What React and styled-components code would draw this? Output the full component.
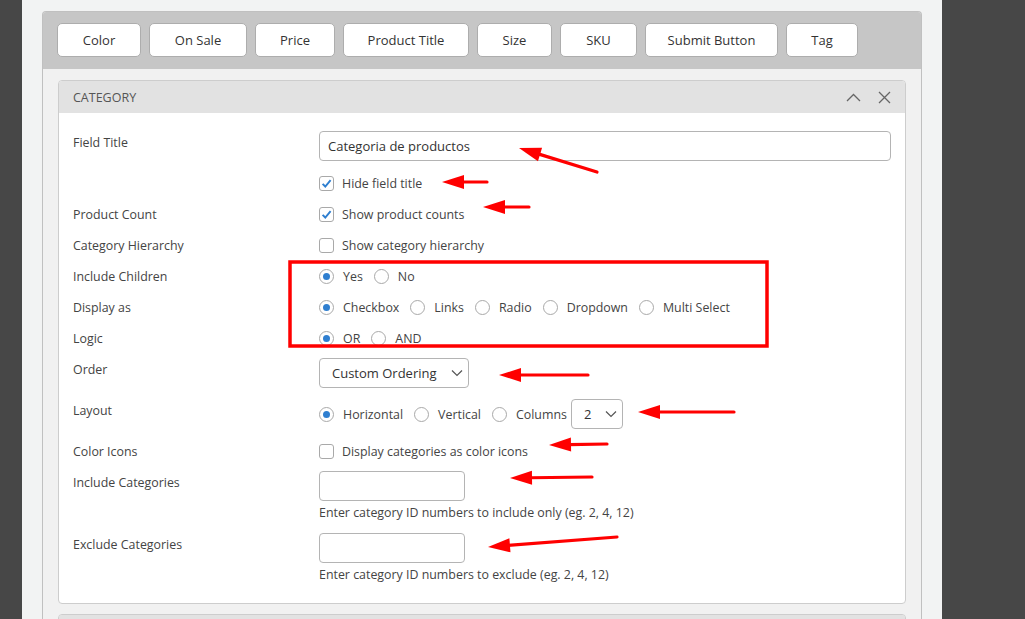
import React from 'react';
import styled, { createGlobalStyle } from 'styled-components';

const GlobalStyle = createGlobalStyle`
  * { box-sizing: border-box; }
  html, body { margin: 0; padding: 0; background: #474747; }
  body {
    font-family: "Open Sans", "Liberation Sans", sans-serif;
    font-size: 12.4px;
    color: #444;
  }
`;

const Page = styled.div`
  position: relative;
  width: 1025px;
  height: 619px;
  overflow: hidden;
`;

const Main = styled.main`
  margin-left: 22px;
  width: 920px;
  height: 619px;
  background: #f2f3f3;
  padding: 11px 20px 0 20px;
`;

const OuterPanel = styled.section`
  width: 880px;
  min-height: 620px;
  border: 1px solid #c0c0c0;
  border-bottom: none;
  border-radius: 4px 4px 0 0;
  background: #f1f1f1;
`;

const Toolbar = styled.nav`
  display: flex;
  gap: 8px;
  padding: 11px 14px 12px;
  background: #c6c6c6;
  border-radius: 3px 3px 0 0;
`;

const TabButton = styled.button`
  width: ${p => p.$w}px;
  height: 34px;
  border: 1px solid #adadad;
  border-radius: 5px;
  background: #fff;
  font-family: inherit;
  font-size: 13px;
  color: #333;
  padding: 0;
`;

const PanelBody = styled.div`
  padding: 11px 15px 0;
  display: flex;
  flex-direction: column;
  gap: 10px;
`;

const Box = styled.div`
  border: 1px solid #cdcdcd;
  border-radius: 4px;
  background: #fff;
  overflow: hidden;
`;

const BoxHeader = styled.header`
  height: 32px;
  display: flex;
  align-items: center;
  justify-content: space-between;
  padding: 1px 14px 0;
  background: #e2e2e2;
  font-size: 12.5px;
  color: #555;
`;

const HeaderIcons = styled.div`
  display: flex;
  align-items: center;
  gap: 17px;
  svg { display: block; }
`;

const Form = styled.div`
  padding: 14px 14px 12px;
`;

const Row = styled.div`
  display: grid;
  grid-template-columns: 246px 1fr;
  align-items: start;
`;

const Label = styled.div`
  line-height: 31px;
`;

const Inline = styled.div`
  height: 31px;
  display: flex;
  align-items: center;
`;

const FieldControl = styled.div`
  padding: 4px 0 7px;
  display: flex;
  flex-direction: ${p => (p.$column ? 'column' : 'row')};
  align-items: ${p => (p.$column ? 'flex-start' : 'center')};
`;

const TextInput = styled.div`
  width: ${p => p.$w}px;
  height: 30px;
  border: 1px solid #b4b4b4;
  border-radius: 4px;
  padding: 0 8px;
  display: flex;
  align-items: center;
  font-size: 13px;
  color: #333;
  background: #fff;
`;

const Help = styled.div`
  margin-top: 3px;
  line-height: 18px;
`;

const SelectBox = styled.div`
  width: ${p => p.$w}px;
  height: 30px;
  border: 1px solid #b4b4b4;
  border-radius: 4px;
  padding: 0 5px 0 12px;
  display: flex;
  align-items: center;
  justify-content: space-between;
  font-size: 13px;
  color: #333;
  background: #fff;
  margin-left: ${p => p.$ml || 0}px;
`;

const CheckSquare = styled.span`
  width: 15px;
  height: 15px;
  border: 1px solid #a9a9a9;
  border-radius: 3px;
  background: #fff;
  display: flex;
  align-items: center;
  justify-content: center;
  margin-right: 8px;
  flex: none;
`;

const RadioCircle = styled.span`
  width: 15px;
  height: 15px;
  border: 1px solid #a9a9a9;
  border-radius: 50%;
  background: #fff;
  display: flex;
  align-items: center;
  justify-content: center;
  margin-right: 9px;
  flex: none;
  &::after {
    content: '';
    width: 7px;
    height: 7px;
    border-radius: 50%;
    background: ${p => (p.$on ? '#2f7fd0' : 'transparent')};
  }
`;

const Option = styled.span`
  display: inline-flex;
  align-items: center;
  margin-right: 11px;
`;

const Overlay = styled.svg`
  position: absolute;
  left: 0;
  top: 0;
  pointer-events: none;
`;

const Chevron = () => (
  <svg width="12" height="8" viewBox="0 0 12 8">
    <polyline points="1,1.5 6,6.5 11,1.5" fill="none" stroke="#555" strokeWidth="1.2" />
  </svg>
);

const Checkbox = ({ checked, children }) => (
  <Inline>
    <CheckSquare>
      {checked && (
        <svg width="11" height="11" viewBox="0 0 11 11">
          <polyline points="1.6,5.8 4.3,8.5 9.6,2.2" fill="none" stroke="#2f7fd0" strokeWidth="1.9" />
        </svg>
      )}
    </CheckSquare>
    {children}
  </Inline>
);

const Radios = ({ items, value }) =>
  items.map(it => (
    <Option key={it}>
      <RadioCircle $on={it === value} />
      {it}
    </Option>
  ));

const tabs = [
  ['Color', 84],
  ['On Sale', 98],
  ['Price', 80],
  ['Product Title', 126],
  ['Size', 75],
  ['SKU', 77],
  ['Submit Button', 133],
  ['Tag', 72],
];

const arrows = [
  [519, 148, 597, 172],
  [442, 182, 487, 182],
  [483, 207, 529, 207],
  [499, 375, 588, 375],
  [638, 412, 734, 412],
  [549, 445, 607, 444],
  [510, 478, 592, 477],
  [488, 547, 617, 537],
];

function Arrow({ x1, y1, x2, y2 }) {
  const a = Math.atan2(y2 - y1, x2 - x1);
  const len = 22;
  const hw = 7;
  const bx = x1 + Math.cos(a) * len;
  const by = y1 + Math.sin(a) * len;
  const px = -Math.sin(a) * hw;
  const py = Math.cos(a) * hw;
  return (
    <g>
      <line x1={bx - Math.cos(a) * 2} y1={by - Math.sin(a) * 2} x2={x2} y2={y2} stroke="#f00" strokeWidth="3.2" strokeLinecap="round" />
      <polygon points={`${x1},${y1} ${bx + px},${by + py} ${bx - px},${by - py}`} fill="#f00" />
    </g>
  );
}

export default function App() {
  return (
    <Page>
      <GlobalStyle />
      <Main>
        <OuterPanel>
          <Toolbar>
            {tabs.map(([t, w]) => (
              <TabButton key={t} $w={w}>{t}</TabButton>
            ))}
          </Toolbar>
          <PanelBody>
            <Box>
              <BoxHeader>
                <span>CATEGORY</span>
                <HeaderIcons>
                  <svg width="15" height="9" viewBox="0 0 15 9">
                    <polyline points="1,8 7.5,1.5 14,8" fill="none" stroke="#666" strokeWidth="1.3" />
                  </svg>
                  <svg width="13" height="13" viewBox="0 0 13 13">
                    <path d="M1 1 L12 12 M12 1 L1 12" stroke="#666" strokeWidth="1.3" />
                  </svg>
                </HeaderIcons>
              </BoxHeader>
              <Form>
                <Row>
                  <Label>Field Title</Label>
                  <FieldControl>
                    <TextInput $w={572}>Categoria de productos</TextInput>
                  </FieldControl>
                </Row>
                <Row>
                  <Label />
                  <Checkbox checked>Hide field title</Checkbox>
                </Row>
                <Row>
                  <Label>Product Count</Label>
                  <Checkbox checked>Show product counts</Checkbox>
                </Row>
                <Row>
                  <Label>Category Hierarchy</Label>
                  <Checkbox>Show category hierarchy</Checkbox>
                </Row>
                <Row>
                  <Label>Include Children</Label>
                  <Inline><Radios items={['Yes', 'No']} value="Yes" /></Inline>
                </Row>
                <Row>
                  <Label>Display as</Label>
                  <Inline>
                    <Radios items={['Checkbox', 'Links', 'Radio', 'Dropdown', 'Multi Select']} value="Checkbox" />
                  </Inline>
                </Row>
                <Row>
                  <Label>Logic</Label>
                  <Inline><Radios items={['OR', 'AND']} value="OR" /></Inline>
                </Row>
                <Row>
                  <Label>Order</Label>
                  <FieldControl>
                    <SelectBox $w={150}>
                      <span>Custom Ordering</span>
                      <Chevron />
                    </SelectBox>
                  </FieldControl>
                </Row>
                <Row>
                  <Label>Layout</Label>
                  <FieldControl>
                    <Radios items={['Horizontal', 'Vertical', 'Columns']} value="Horizontal" />
                    <SelectBox $w={52} $ml={-7}>
                      <span>2</span>
                      <Chevron />
                    </SelectBox>
                  </FieldControl>
                </Row>
                <Row>
                  <Label>Color Icons</Label>
                  <Checkbox>Display categories as color icons</Checkbox>
                </Row>
                <Row>
                  <Label>Include Categories</Label>
                  <FieldControl $column>
                    <TextInput $w={146} />
                    <Help>Enter category ID numbers to include only (eg. 2, 4, 12)</Help>
                  </FieldControl>
                </Row>
                <Row>
                  <Label>Exclude Categories</Label>
                  <FieldControl $column>
                    <TextInput $w={146} />
                    <Help>Enter category ID numbers to exclude (eg. 2, 4, 12)</Help>
                  </FieldControl>
                </Row>
              </Form>
            </Box>
            <Box>
              <BoxHeader />
            </Box>
          </PanelBody>
        </OuterPanel>
      </Main>
      <Overlay width="1025" height="619" viewBox="0 0 1025 619">
        <rect x="290" y="262" width="477" height="84" fill="none" stroke="#f00" strokeWidth="3.5" />
        {arrows.map(([x1, y1, x2, y2], i) => (
          <Arrow key={i} x1={x1} y1={y1} x2={x2} y2={y2} />
        ))}
      </Overlay>
    </Page>
  );
}
